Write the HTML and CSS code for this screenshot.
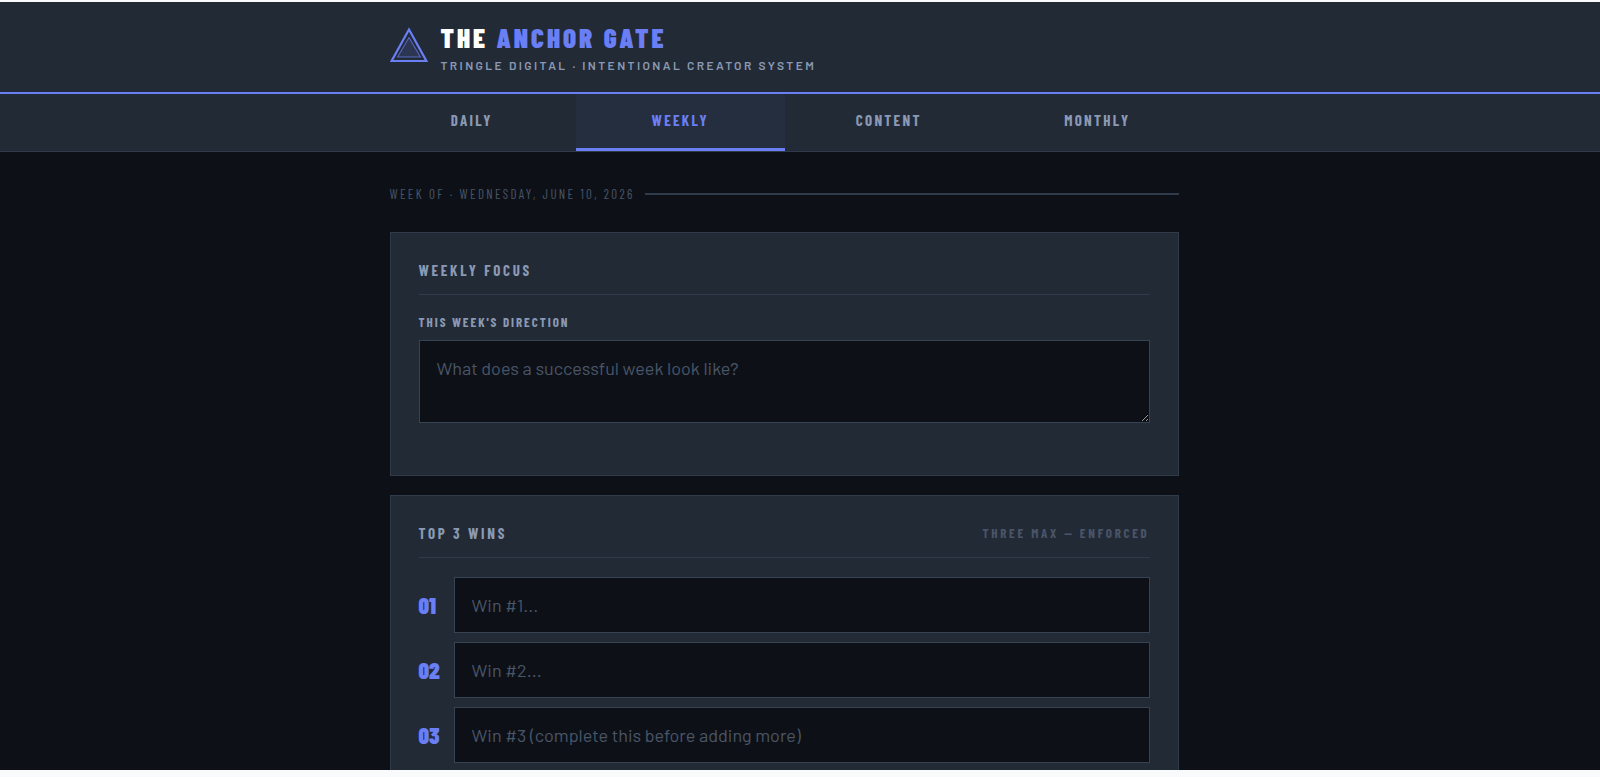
FILE: index.html
```html
<!DOCTYPE html>
<html lang="en">
<head>
  <meta charset="UTF-8">
  <meta name="viewport" content="width=device-width, initial-scale=1.0">
  <title>The Anchor Gate</title>
  <link rel="stylesheet" href="styles.css">
</head>
<body>

<div class="app">
  <header class="header">
    <div class="container header-inner">
      <svg class="logo" viewBox="0 0 38 36" aria-hidden="true">
        <polygon points="19,2.5 36.4,34 1.6,34" fill="none" stroke="#6b7ff5" stroke-width="2.2"/>
        <polygon points="19,10.5 30.4,30 7.6,30" fill="#6b7ff5" fill-opacity="0.15" stroke="#6b7ff5" stroke-opacity="0.7" stroke-width="1.1"/>
      </svg>
      <div class="brand">
        <h1>THE <span>ANCHOR GATE</span></h1>
        <p>TRINGLE DIGITAL · INTENTIONAL CREATOR SYSTEM</p>
      </div>
    </div>
  </header>

  <nav class="nav">
    <div class="tabs">
      <button class="tab" type="button">DAILY</button>
      <button class="tab active" type="button">WEEKLY</button>
      <button class="tab" type="button">CONTENT</button>
      <button class="tab" type="button">MONTHLY</button>
    </div>
  </nav>

  <main class="main">
    <div class="container">
      <div class="date-bar">WEEK OF · WEDNESDAY, JUNE 10, 2026</div>

      <section class="card focus-card">
        <div class="card-head">
          <h2>WEEKLY FOCUS</h2>
        </div>
        <label for="direction">THIS WEEK'S DIRECTION</label>
        <textarea id="direction" placeholder="What does a successful week look like?"></textarea>
      </section>

      <section class="card">
        <div class="card-head">
          <h2>TOP 3 WINS</h2>
          <span class="tag">THREE MAX — ENFORCED</span>
        </div>
        <div class="wins">
          <div class="win">
            <label class="num" for="win1">01</label>
            <input type="text" id="win1" placeholder="Win #1...">
          </div>
          <div class="win">
            <label class="num" for="win2">02</label>
            <input type="text" id="win2" placeholder="Win #2...">
          </div>
          <div class="win">
            <label class="num" for="win3">03</label>
            <input type="text" id="win3" placeholder="Win #3 (complete this before adding more)">
          </div>
        </div>
      </section>
    </div>
  </main>
</div>

</body>
</html>
```
FILE: styles.css
```css
:root {
  --bg: #0d1117;
  --panel: #222a36;
  --line: #2f3b4a;
  --accent: #6b7ff5;
  --muted: #8b9ab4;
  --dim: #4a5568;
  --condensed: "Barlow Condensed", "Roboto Condensed", "Liberation Sans Narrow", "Liberation Sans", sans-serif;
  --body: "Barlow", Roboto, sans-serif;
}

* {
  box-sizing: border-box;
  margin: 0;
  padding: 0;
}

body {
  background: #f8fafc;
  font-family: var(--body);
  padding: 2px 0 7px;
}

.app {
  height: calc(100vh - 9px);
  overflow: hidden;
  background: var(--bg);
}

.header,
.nav,
.main {
  padding-right: 31px;
}

.container {
  max-width: 834px;
  margin: 0 auto;
  padding: 0 23px 0 22px;
}

/* Header */
.header {
  background: var(--panel);
  border-bottom: 2px solid var(--accent);
}

.header-inner {
  display: flex;
  align-items: flex-start;
  gap: 13px;
  padding-top: 20px;
  padding-bottom: 20px;
}

.logo {
  width: 38px;
  height: 36px;
  margin-top: 5px;
}

.brand h1 {
  font-family: var(--condensed);
  font-size: 27px;
  font-weight: 900;
  line-height: 30px;
  letter-spacing: 3px;
  color: #fff;
}

.brand h1 span {
  color: var(--accent);
}

.brand p {
  margin-top: 6px;
  font-size: 12px;
  font-weight: 600;
  line-height: 14px;
  letter-spacing: 0.2em;
  color: var(--muted);
}

/* Tabs */
.nav {
  background: var(--panel);
  border-bottom: 1px solid var(--line);
}

.tabs {
  display: flex;
  max-width: 834px;
  margin: 0 auto;
}

.tab {
  flex: 1;
  height: 57px;
  padding-bottom: 2px;
  border: none;
  border-bottom: 3px solid transparent;
  background: none;
  font-family: var(--condensed);
  font-size: 15px;
  font-weight: 700;
  letter-spacing: 0.15em;
  color: var(--muted);
  cursor: pointer;
}

.tab.active {
  color: var(--accent);
  background: #252e3f;
  border-bottom-color: var(--accent);
}

/* Content */
.main {
  padding-top: 34px;
}

.date-bar {
  display: flex;
  align-items: center;
  gap: 10px;
  margin-bottom: 30px;
  font-family: var(--condensed);
  font-size: 13px;
  line-height: 16px;
  letter-spacing: 0.18em;
  color: var(--dim);
}

.date-bar::after {
  content: "";
  flex: 1;
  height: 2px;
  background: var(--line);
}

.card {
  margin-bottom: 19px;
  padding: 28px;
  background: var(--panel);
  border: 1px solid var(--line);
}

.focus-card {
  padding-bottom: 52px;
}

.card-head {
  display: flex;
  justify-content: space-between;
  align-items: center;
  margin-bottom: 19px;
  padding-bottom: 15px;
  border-bottom: 1px solid var(--line);
  font-family: var(--condensed);
  font-size: 15px;
  font-weight: 700;
  line-height: 18px;
  letter-spacing: 0.18em;
  color: var(--muted);
}

.card-head h2 {
  font-size: 15px;
}

.tag {
  font-size: 13px;
  color: var(--dim);
}

label {
  display: block;
  margin-bottom: 10px;
  font-family: var(--condensed);
  font-size: 13px;
  font-weight: 700;
  line-height: 16px;
  letter-spacing: 0.15em;
  color: var(--muted);
}

input,
textarea {
  display: block;
  width: 100%;
  padding: 15px 17px;
  background: var(--bg);
  border: 1px solid #364353;
  border-radius: 0;
  outline: none;
  font-family: var(--body);
  font-size: 18px;
  line-height: 24px;
  color: #fff;
}

textarea {
  height: 83px;
  resize: vertical;
}

input {
  height: 56px;
}

input::placeholder,
textarea::placeholder {
  color: var(--dim);
}

.wins {
  display: grid;
  gap: 9px;
}

.win {
  display: grid;
  grid-template-columns: 24px 1fr;
  align-items: center;
  gap: 11px;
}

.num {
  margin: 0;
  font-size: 23px;
  font-weight: 900;
  letter-spacing: 0;
  color: var(--accent);
}
```
